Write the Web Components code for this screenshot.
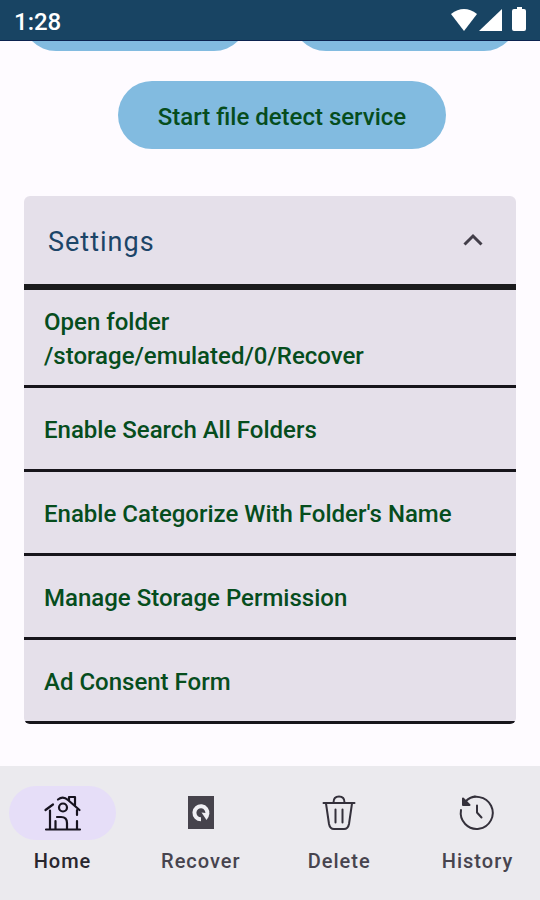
<!DOCTYPE html>
<html lang="en">
<head>
<meta charset="utf-8">
<meta name="viewport" content="width=device-width, initial-scale=1">
<title>Recover</title>
<style>
  html, body { height: 100%; margin: 0; }
  body { font-family: Roboto, "Liberation Sans", sans-serif; background: #fefbff; }
</style>
</head>
<body>
<app-screen>
  <status-bar slot="status">1:28</status-bar>
  <button-pair></button-pair>
  <pill-button>Start file detect service</pill-button>
  <settings-card heading="Settings">
    <settings-item>Open folder /storage/emulated/0/Recover</settings-item>
    <settings-item>Enable Search All Folders</settings-item>
    <settings-item>Enable Categorize With Folder's Name</settings-item>
    <settings-item>Manage Storage Permission</settings-item>
    <settings-item>Ad Consent Form</settings-item>
  </settings-card>
  <nav-bar slot="nav">
    <nav-item active>Home
      <svg slot="icon" width="40" height="40" viewBox="0 0 40 40" fill="none" stroke="#17131f" stroke-width="2.200" stroke-linecap="round" stroke-linejoin="round">
        <path d="M3 36.500H37M7 36V17.500M2.500 17L10 11.500M15 6.500Q20 2.500 25 7L36.500 17M26 7V4H32V12M34 17V22M34 28V36M12.500 36V28M24 36V30Q24 24 18 24H14"/>
        <circle cx="20" cy="14.500" r="4"/>
      </svg>
    </nav-item>
    <nav-item>Recover
      <svg slot="icon" width="40" height="40" viewBox="0 0 40 40">
        <rect x="7" y="3" width="26" height="33" fill="#46434c"/>
        <path d="M20 26.300A6.500 6.500 0 1 1 26.300 21" fill="none" stroke="#f0eff3" stroke-width="4"/>
        <path d="M20.500 19.500L28.400 20.500Q28 24.500 25.500 27Z" fill="#f0eff3"/>
      </svg>
    </nav-item>
    <nav-item>Delete
      <svg slot="icon" width="40" height="40" viewBox="0 0 40 40" fill="none" stroke="#34313b" stroke-width="2" stroke-linecap="round" stroke-linejoin="round">
        <path d="M4.500 10H35.500M14.500 9.500Q14.500 3.500 20 3.500T25.500 9.500M7 10.500L10 31Q11 36 15 36H25Q29 36 30 31L33 10.500M16.500 16.500V29.500M23.500 16.500V29.500"/>
      </svg>
    </nav-item>
    <nav-item>History
      <svg slot="icon" width="40" height="40" viewBox="0 0 40 40" fill="none" stroke="#34313b" stroke-width="2" stroke-linecap="round" stroke-linejoin="round">
        <path d="M4 17A16 16 0 1 0 8.500 8.500Q13 4 18 3.600M20 12.500V19.500L24.500 24.500"/>
        <path d="M6 5.500V12H12.500Z" fill="#34313b"/>
      </svg>
    </nav-item>
  </nav-bar>
</app-screen>

<script>
function define(name, html, setup) {
  const template = document.createElement('template');
  template.innerHTML = html;
  customElements.define(name, class extends HTMLElement {
    constructor() {
      super();
      this.attachShadow({ mode: 'open' }).append(template.content.cloneNode(true));
    }
    connectedCallback() { if (setup) setup(this, this.shadowRoot); }
  });
}

define('app-screen', `
  <style>
    :host { display: flex; flex-direction: column; height: 100vh; overflow: hidden; }
    main { flex: 1; min-height: 0; overflow: hidden; display: flex; flex-direction: column; }
  </style>
  <slot name="status"></slot>
  <main><slot></slot></main>
  <slot name="nav"></slot>`);

define('status-bar', `
  <style>
    :host { display: flex; justify-content: space-between; align-items: center; flex: none;
      box-sizing: border-box; height: 41px; padding: 4px 12px 0 14px; background: #184463;
      border-bottom: 1px solid #0c2350; color: #fff; font-size: 24px; line-height: 28px; font-weight: 500; }
    svg { display: block; margin-bottom: 4px; }
  </style>
  <span><slot></slot></span>
  <svg width="78" height="26" viewBox="0 0 78 26" fill="#fff" aria-hidden="true">
    <path d="M1 7Q14 -3 27 7L14 24Z"/>
    <path d="M52 2V24H29Z"/>
    <path d="M67 0H72V2H74Q76 2 76 4V22Q76 24 74 24H64Q62 24 62 22V4Q62 2 64 2H67Z"/>
  </svg>`);

/* The row is scrolled under the status bar, so only its lower edge shows. */
define('button-pair', `
  <style>
    :host { display: grid; grid-template-columns: 1fr 1fr; gap: 44px; flex: none;
      margin-top: -58px; padding: 0 22px 30px; }
    button { height: 68px; border: 0; border-radius: 34px; background: #82bbe0; }
  </style>
  <button type="button" aria-label="Start"></button>
  <button type="button" aria-label="Stop"></button>`);

define('pill-button', `
  <style>
    :host { display: flex; justify-content: center; flex: none; padding-left: 24px; }
    button { height: 68px; padding: 4px 40px 0; border: 0; border-radius: 34px; background: #82bbe0;
      color: #064d1d; font: 500 24px/32px Roboto, "Liberation Sans", sans-serif; }
  </style>
  <button type="button"><slot></slot></button>`);

define('settings-card', `
  <style>
    :host { display: block; flex: none; margin: 47px 24px 0; border-radius: 6px; overflow: hidden; background: #e5e0ea; }
    h2 { margin: 0; }
    button { display: flex; justify-content: space-between; align-items: center; width: 100%; height: 94px;
      padding: 4px 31px 0 24px; border: 0; border-bottom: 6px solid #1b1b1d; background: none; color: #1c4568;
      font: 400 27px/32px Roboto, "Liberation Sans", sans-serif; letter-spacing: 1px; }
    svg { display: block; margin-bottom: 4px; }
    ul { margin: 0; padding: 0; }
  </style>
  <h2><button type="button" aria-expanded="true"><span></span>
    <svg width="24" height="24" viewBox="0 0 24 24" fill="none" stroke="#423e49" stroke-width="3" aria-hidden="true"><path d="M3.500 16.500L12 8L20.500 16.500"/></svg>
  </button></h2>
  <ul role="list"><slot></slot></ul>`,
  (host, root) => { root.querySelector('span').textContent = host.getAttribute('heading'); });

define('settings-item', `
  <style>
    :host { display: block; }
    button { display: flex; align-items: center; width: 100%; min-height: 84px; padding: 15px 100px 12px 20px;
      border: 0; border-bottom: 3px solid #17151b; background: none; text-align: left;
      color: #064d1d; font: 500 24px/34px Roboto, "Liberation Sans", sans-serif; }
    :host(:nth-of-type(n+2)) button { padding: 3px 40px 0 20px; }
  </style>
  <button type="button"><span><slot></slot></span></button>`,
  host => host.setAttribute('role', 'listitem'));

define('nav-bar', `
  <style>
    :host { display: block; flex: none; background: #ebeaee; }
    nav { display: flex; justify-content: space-between; padding: 20px 9px 25px; }
  </style>
  <nav aria-label="Main"><slot></slot></nav>`);

define('nav-item', `
  <style>
    :host { display: block; width: 107px; }
    a { display: flex; flex-direction: column; align-items: center; gap: 7px; color: #47444e;
      text-decoration: none; font-size: 20px; line-height: 28px; font-weight: 500; letter-spacing: 1px; }
    .pill { display: flex; align-items: center; justify-content: center; align-self: stretch;
      height: 54px; border-radius: 27px; }
    :host([active]) .pill { background: #e6def8; }
    :host([active]) a { color: #29272e; }
  </style>
  <a href="#"><span class="pill"><slot name="icon"></slot></span><span><slot></slot></span></a>`,
  (host, root) => { if (host.hasAttribute('active')) root.querySelector('a').setAttribute('aria-current', 'page'); });
</script>
</body>
</html>
